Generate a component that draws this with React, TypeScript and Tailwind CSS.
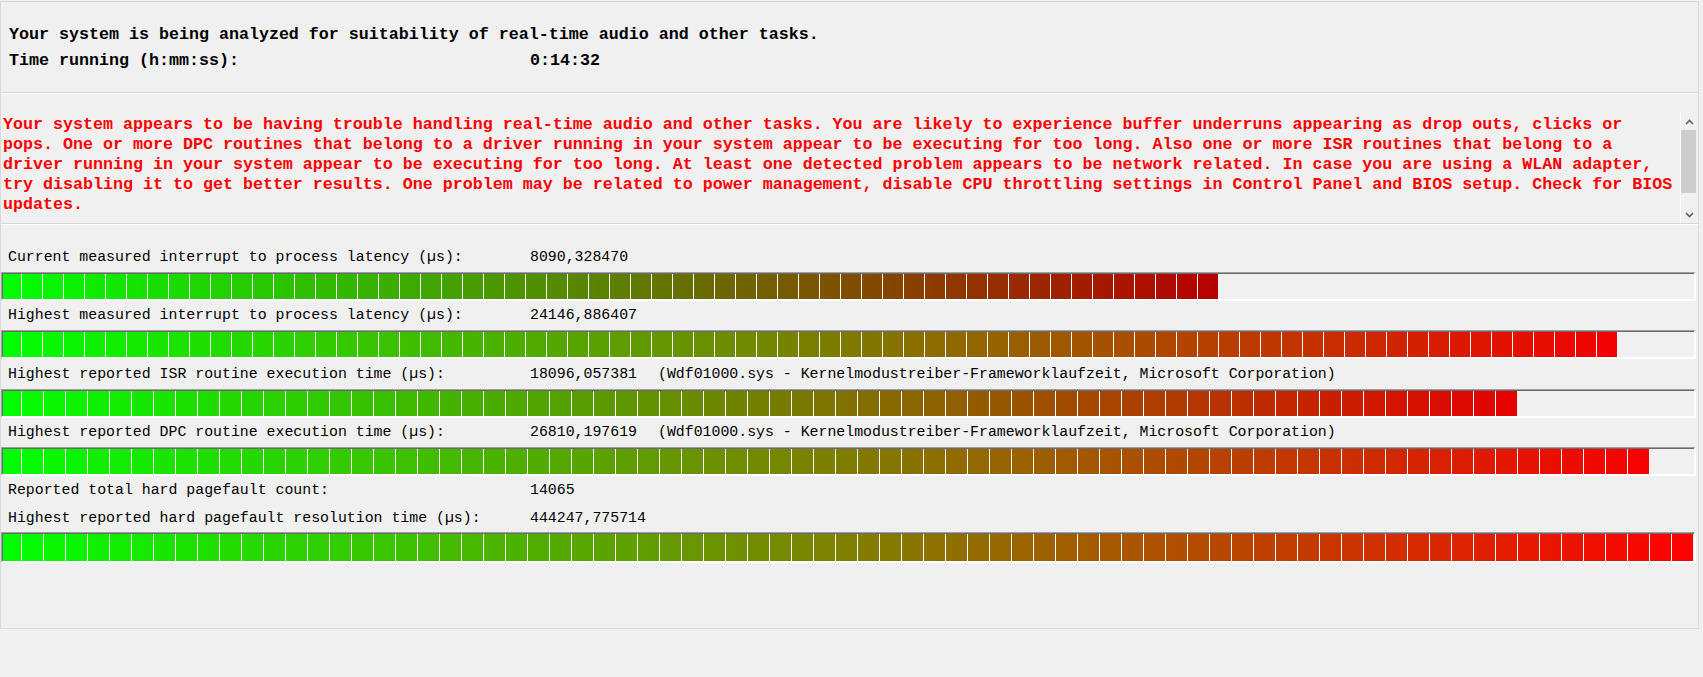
import React from 'react';

type Meter = {
  label: string;
  value: string;
  extra?: string;
  cells: number;
  pitch: number;
};

const driver = '(Wdf01000.sys - Kernelmodustreiber-Frameworklaufzeit, Microsoft Corporation)';

const meters: Meter[] = [
  { label: 'Current measured interrupt to process latency (µs):', value: '8090,328470', cells: 58, pitch: 21 },
  { label: 'Highest measured interrupt to process latency (µs):', value: '24146,886407', cells: 77, pitch: 21 },
  { label: 'Highest reported ISR routine execution time (µs):', value: '18096,057381', extra: driver, cells: 69, pitch: 22 },
  { label: 'Highest reported DPC routine execution time (µs):', value: '26810,197619', extra: driver, cells: 75, pitch: 22 },
];

const warning = [
  'Your system appears to be having trouble handling real-time audio and other tasks. You are likely to experience buffer underruns appearing as drop outs, clicks or',
  'pops. One or more DPC routines that belong to a driver running in your system appear to be executing for too long. Also one or more ISR routines that belong to a',
  'driver running in your system appear to be executing for too long. At least one detected problem appears to be network related. In case you are using a WLAN adapter,',
  'try disabling it to get better results. One problem may be related to power management, disable CPU throttling settings in Control Panel and BIOS setup. Check for BIOS',
  'updates.',
];

function LevelBar({ cells, pitch, tall }: { cells: number; pitch: number; tall?: boolean }) {
  const end = cells * pitch;
  const red = Math.min(255, Math.round((end / 1694) * 255));
  const offset = pitch === 21 ? 2 : 3;

  return (
    <div className="mr-[2px] border-t border-l border-t-[#a0a0a0] border-l-[#a0a0a0] border-b-2 border-r-2 border-b-white border-r-white">
      <div className={`overflow-hidden border-t border-l border-[#696969] ${tall ? 'h-[28px]' : 'h-[26px]'}`}>
        <div
          className="flex h-full"
          style={{
            marginLeft: -offset,
            width: end - 1,
            background: `linear-gradient(to right, rgb(0,255,0), rgb(${red},0,0))`,
          }}
        >
          {Array.from({ length: cells }).map((_, i) => (
            <div
              key={i}
              className={i < cells - 1 ? 'h-full shrink-0 border-r border-white' : 'h-full shrink-0'}
              style={{ width: i < cells - 1 ? pitch : pitch - 1 }}
            />
          ))}
        </div>
      </div>
    </div>
  );
}

function Row({ label, value, extra, h }: { label: string; value: string; extra?: string; h: string }) {
  return (
    <div className={`flex items-center pl-[7px] text-[14.87px] text-black whitespace-pre ${h}`}>
      <span className="w-[522px] shrink-0">{label}</span>
      <span className="w-[128px] shrink-0">{value}</span>
      {extra && <span>{extra}</span>}
    </div>
  );
}

function Chevron({ up }: { up?: boolean }) {
  return (
    <svg width="9" height="6" viewBox="0 0 9 6" className="mx-auto">
      <path
        d={up ? 'M1 5 L4.5 1.5 L8 5' : 'M1 1 L4.5 4.5 L8 1'}
        fill="none"
        stroke="#606060"
        strokeWidth="1.6"
      />
    </svg>
  );
}

export default function App() {
  return (
    <div className="min-h-screen w-full bg-[#f0f0f0] pt-px" style={{ fontFamily: '"Liberation Mono", "Courier New", monospace' }}>
      <div className="h-[628px] w-[1699px] border border-[#d9d9d9] flex flex-col">
        {/* status header */}
        <div className="h-[90px] pt-[20px] pl-[8px] text-[16.67px] font-bold text-black leading-[26px] whitespace-pre">
          <div>Your system is being analyzed for suitability of real-time audio and other tasks.</div>
          <div className="flex">
            <span className="w-[521px] shrink-0">Time running (h:mm:ss):</span>
            <span>0:14:32</span>
          </div>
        </div>
        <div className="border-t border-b border-t-[#d6d6d6] border-b-white" />

        {/* verdict */}
        <div className="mt-[19px] flex h-[110px]">
          <div className="flex-1 pt-[2px] pl-[2px] text-[16.67px] font-bold leading-[20px] text-[#ff0000] whitespace-pre overflow-hidden">
            {warning.map((line, i) => (
              <div key={i}>{line}</div>
            ))}
          </div>
          <div className="w-[18px] border-l border-white flex flex-col">
            <div className="h-[17px] flex items-center">
              <Chevron up />
            </div>
            <div className="h-[63px] w-[15px] bg-[#cdcdcd]" />
            <div className="flex-1" />
            <div className="h-[17px] flex items-center">
              <Chevron />
            </div>
          </div>
        </div>
        <div className="border-t border-b border-t-[#d6d6d6] border-b-white" />

        {/* meters */}
        <div className="pt-[17px]">
          {meters.map((m) => (
            <div key={m.label}>
              <Row label={m.label} value={m.value} extra={m.extra} h="h-[29.5px]" />
              <LevelBar cells={m.cells} pitch={m.pitch} />
            </div>
          ))}
          <Row label="Reported total hard pagefault count:" value="14065" h="h-[28px]" />
          <Row label="Highest reported hard pagefault resolution time (µs):" value="444247,775714" h="h-[28px]" />
          <LevelBar cells={77} pitch={22} tall />
        </div>
      </div>
    </div>
  );
}
